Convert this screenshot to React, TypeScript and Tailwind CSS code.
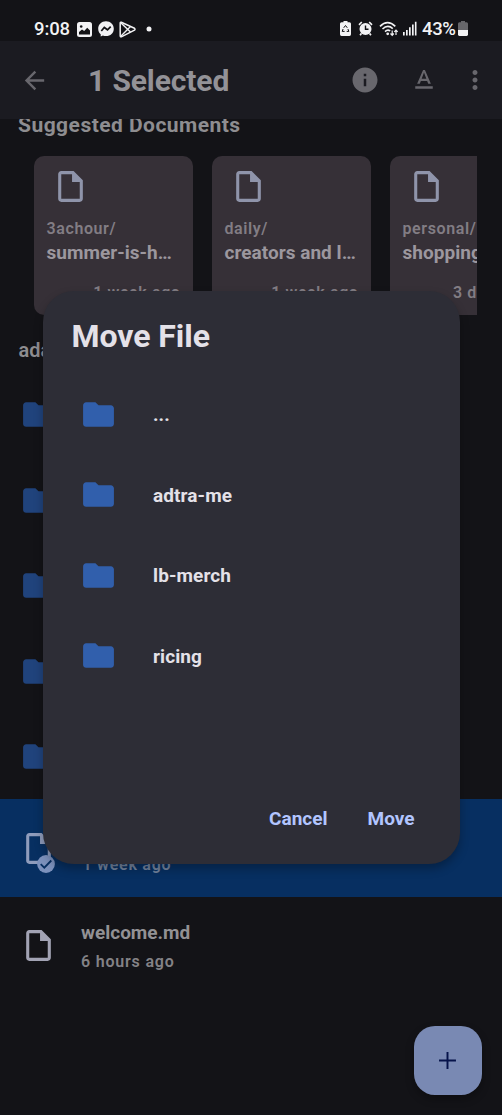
import React from "react";

function Icon({ d, size, className }: { d: string; size: number; className?: string }) {
  return (
    <svg width={size} height={size} viewBox="0 0 24 24" fill="currentColor" className={"shrink-0 " + (className ?? "")}>
      <path d={d} />
    </svg>
  );
}

const FILE = "M14 2H6c-1.1 0-1.99.9-1.99 2L4 20c0 1.1.89 2 1.99 2H18c1.1 0 2-.9 2-2V8l-6-6zM6 20V4h7v5h5v11H6z";
const FOLDER = "M10 4H4c-1.1 0-1.99.9-1.99 2L2 18c0 1.1.9 2 2 2h16c1.1 0 2-.9 2-2V8c0-1.1-.9-2-2-2h-8l-2-2z";
const BACK = "M20 11H7.83l5.59-5.59L12 4l-8 8 8 8 1.41-1.41L7.83 13H20v-2z";
const INFO = "M12 2C6.48 2 2 6.48 2 12s4.48 10 10 10 10-4.48 10-10S17.52 2 12 2zm1 15h-2v-6h2v6zm0-8h-2V7h2v2z";
const FORMAT = "M5 17v2h14v-2H5zm4.5-4.2h5l.9 2.2h2.1L12.75 4h-1.5L6.5 15h2.1l.9-2.2zM12 5.98L13.87 11h-3.74L12 5.98z";
const MORE = "M12 8c1.1 0 2-.9 2-2s-.9-2-2-2-2 .9-2 2 .9 2 2 2zm0 2c-1.1 0-2 .9-2 2s.9 2 2 2 2-.9 2-2-.9-2-2-2zm0 6c-1.1 0-2 .9-2 2s.9 2 2 2 2-.9 2-2-.9-2-2-2z";
const PLUS = "M19 12.8h-6.200v6.200h-1.600v-6.200H5v-1.600h6.200V5h1.600v6.200H19z";

function StatusBar() {
  return (
    <header className="flex h-[41px] shrink-0 items-start pl-[34px] pr-[34px] pt-[17px] text-[#f2f2f4]">
      <span className="w-[43px] text-[18.5px] font-medium leading-[24px] tracking-[-0.1px]">9:08</span>
      <svg width="15" height="15" viewBox="0 0 15 15" className="mt-[5px]">
        <rect width="15" height="15" rx="2.5" fill="currentColor" />
        <circle cx="4.2" cy="4.5" r="1.3" fill="#131316" />
        <path d="M2 12.5V10l3-2.5L7.2 9l3-3.3L13 8.5v4z" fill="#131316" />
      </svg>
      <svg width="16" height="16" viewBox="0 0 16 16" className="ml-[6px] mt-[4px]">
        <path d="M8 .2C3.5.2.2 3.4.2 7.7c0 2.3 1 4.3 2.5 5.6v2.3l2.2-1.1c1 .4 2 .6 3.1.6 4.5 0 7.8-3.2 7.8-7.4S12.5.2 8 .2z" fill="currentColor" />
        <path d="M3.3 10l3-3.5 3.2 2.3 3.2-3.2" fill="none" stroke="#131316" strokeWidth="1.7" />
      </svg>
      <svg width="17" height="17" viewBox="0 0 17 17" fill="none" stroke="currentColor" strokeLinejoin="round" className="ml-[5px] mt-[4px]">
        <path d="M2.3 1.2 15.5 7.3q1 .9 0 1.8L2.3 15.8q-1.1.2-1.1-1V2.2q0-1.200 1.1-1z" strokeWidth="1.5" />
        <path d="M2 2l9.5 9M2 15l9.5-9.5" strokeWidth="1.4" />
      </svg>
      <svg width="6" height="6" className="ml-[10px] mt-[9px]"><circle cx="3" cy="3" r="2.5" fill="currentColor" /></svg>
      <div className="ml-auto flex">
        <svg width="11" height="15" viewBox="0 0 11 15" className="mt-[4px]">
          <path d="M3.5 0h4v1.3H9.5Q11 1.3 11 2.8v10.5q0 1.7-1.5 1.7h-8Q0 15 0 13.3V2.8q0-1.5 1.5-1.5h2z" fill="currentColor" />
          <path d="M3.7 6.8 5.5 4.5l1.8 2.3M7.900 8l1 2.4H6.7M4.6 10.4H2.2L3.100 8" fill="none" stroke="#131316" strokeWidth="1" />
        </svg>
        <svg width="15" height="15" viewBox="0 0 15 15" className="ml-[7px] mt-[4px]">
          <circle cx="7.5" cy="8" r="6" fill="currentColor" />
          <path d="M1 3.8 3.8 1M14 3.8 11.2 1M3.3 12.5l-1.2 1.8M11.7 12.5l1.2 1.8" stroke="currentColor" strokeWidth="1.7" />
          <path d="M7.5 4.5V8.2h3" fill="none" stroke="#131316" strokeWidth="1.4" />
        </svg>
        <svg width="20" height="16" viewBox="0 0 20 16" fill="none" stroke="currentColor" className="ml-[6px] mt-[4px]">
          <path d="M1 5.3q7.5-7.3 15.3 0" strokeWidth="1.7" />
          <path d="M3.5 8q5.2-4.9 10.3-.4" strokeWidth="1.6" />
          <path d="M6 10.6q2.7-2.6 5.2-.6" strokeWidth="1.5" />
          <circle cx="8.7" cy="12.8" r="1.4" fill="currentColor" stroke="none" />
          <path d="M13.2 9.5v4.6m-1.7-1.6 1.7 1.8 1.6-1.8M17 14V9.300m-1.7 1.6L17 9.2l1.7 1.7" strokeWidth="1.2" />
        </svg>
        <svg width="14" height="15" viewBox="0 0 14 15" fill="currentColor" className="ml-[4px] mt-[4px]">
          <path d="M0 11h1.7v3.5H0zM3 9h1.7v5.5H3zM6 6.2h1.7v8.3H6zM9 3.4h1.7v11.1H9zM11.9.7h1.6v13.8h-1.6z" />
        </svg>
        <span className="ml-[5px] w-[36px] text-[18.5px] font-medium leading-[24px] tracking-[-0.35px]">43%</span>
        <svg width="10" height="15" viewBox="0 0 11 15" preserveAspectRatio="none" className="mt-[4px]">
          <path d="M3.3 0h4.4v1.3h1.8Q11 1.3 11 2.8V9H0V2.8q0-1.5 1.5-1.5h1.8z" fill="#66666a" />
          <path d="M0 9h11v4.3q0 1.7-1.5 1.7h-8Q0 15 0 13.3z" fill="currentColor" />
        </svg>
      </div>
    </header>
  );
}

function AppBar() {
  return (
    <nav className="flex h-[78px] shrink-0 items-center bg-[#1b1b21] pl-[20px] pr-[12px] text-[#68676d]">
      <Icon d={BACK} size={29} />
      <h1 className="ml-[39px] mt-[2px] text-[30px] font-bold leading-[40px] tracking-[-0.12px] text-[#939297]">1 Selected</h1>
      <Icon d={INFO} size={30} className="ml-auto" />
      <Icon d={FORMAT} size={30} className="ml-[29px]" />
      <Icon d={MORE} size={30} className="ml-[21px]" />
    </nav>
  );
}

const documents = [
  { dir: "3achour/", name: "summer-is-h…", age: "1 week ago" },
  { dir: "daily/", name: "creators and l…", age: "1 week ago" },
  { dir: "personal/", name: "shopping", age: "3 days ago" },
];

function DocumentCard({ dir, name, age }: { dir: string; name: string; age: string }) {
  return (
    <article className="flex h-[159px] w-[159px] shrink-0 flex-col rounded-[10px] bg-[#363037] px-[12.5px] pt-[12px]">
      <Icon d={FILE} size={37} className="ml-[5.500px] text-[#8f94aa]" />
      <p className="mt-[13px] text-[16px] font-semibold leading-[22px] tracking-[0.6px] text-[#827d84]">{dir}</p>
      <p className="mt-px whitespace-nowrap text-[19px] font-bold leading-[24px] tracking-[0.03px] text-[#9c979e]">{name}</p>
      <p className="mt-[17px] text-right text-[16px] font-semibold leading-[22px] tracking-[0.6px] text-[#827d84]">{age}</p>
    </article>
  );
}

const folderRows = [1, 2, 3, 4, 5];

function FileList() {
  return (
    <main className="flex min-h-0 flex-1 flex-col overflow-hidden text-[#8e8d90]">
      <h2 className="-mt-[9px] ml-[18px] text-[21px] font-bold leading-[30px] tracking-[0.47px]">Suggested Documents</h2>
      <section className="ml-[34px] mr-[25px] mt-[16px] flex gap-[19px] overflow-hidden">
        {documents.map((doc) => <DocumentCard key={doc.name} {...doc} />)}
      </section>
      <h2 className="ml-[18.5px] mt-[20px] text-[20px] font-semibold leading-[30px]">ada</h2>
      <div className="mt-[7px] flex flex-col">
        {folderRows.map((row) => (
          <div key={row} className="flex h-[85.5px] items-center pl-[20px]">
            <Icon d={FOLDER} size={37} className="text-[#20437c]" />
          </div>
        ))}
      </div>
      <div className="-mt-[0.500px] flex h-[97.5px] shrink-0 items-center bg-[#072f61] pl-[19.5px]">
        <div className="relative mt-[2px] h-[37px] w-[37px]">
          <Icon d={FILE} size={37} className="text-[#8f9cbc]" />
          <svg width="18" height="18" viewBox="0 0 18 18" className="absolute left-[17px] top-[25px]">
            <circle cx="9" cy="9" r="8.9" fill="#7c91bc" />
            <path d="M3.7 9.2 7.3 12.7 14.3 5.5" fill="none" stroke="#072f61" strokeWidth="1.8" />
          </svg>
        </div>
        <span className="ml-[26px] mt-[34px] text-[16px] font-semibold leading-[22px] tracking-[0.75px] text-[#73839d]">1 week ago</span>
      </div>
      <div className="flex h-[98px] shrink-0 items-center pl-[19.5px]">
        <Icon d={FILE} size={37} className="text-[#a2a3b4]" />
        <div className="ml-[24.5px] mt-[4px]">
          <p className="text-[19px] font-bold leading-[26px] text-[#929194]">welcome.md</p>
          <p className="mt-[3px] text-[16px] font-semibold leading-[26px] tracking-[0.8px] text-[#838286]">6 hours ago</p>
        </div>
      </div>
    </main>
  );
}

const destinations = ["...", "adtra-me", "lb-merch", "ricing"];

function MoveDialog() {
  return (
    <section role="dialog" className="absolute left-[42.5px] top-[291px] flex h-[573px] w-[417px] flex-col rounded-[31px] bg-[#2d2d36] shadow-[0_5px_10px_rgba(0,0,0,0.28)]">
      <h2 className="ml-[29px] mt-[24px] text-[32px] font-bold leading-[42px] tracking-[-0.05px] text-[#e4e1e8]">Move File</h2>
      <ul className="mt-[17px] flex flex-col">
        {destinations.map((name) => (
          <li key={name} className="flex h-[80.5px] items-center pl-[37.5px]">
            <Icon d={FOLDER} size={37} className="text-[#315fac]" />
            <span className="ml-[36px] mt-[2px] text-[19px] font-bold leading-[26px] tracking-[0.1px] text-[#e4e1e8]">{name}</span>
          </li>
        ))}
      </ul>
      <div className="mb-[32px] mr-[45px] mt-auto flex justify-end gap-[40px] text-[19px] font-bold leading-[26px] text-[#b2c5ff]">
        <button>Cancel</button>
        <button>Move</button>
      </div>
    </section>
  );
}

export default function App() {
  return (
    <div className="relative flex h-[1115px] w-[502px] flex-col overflow-hidden bg-[#131317] font-['Roboto',sans-serif]">
      <StatusBar />
      <AppBar />
      <FileList />
      <MoveDialog />
      <button className="absolute bottom-[20px] right-[20px] flex h-[69px] w-[68.5px] items-center justify-center rounded-[21px] bg-[#7989b3] text-[#06134a] shadow-[0_4px_8px_rgba(0,0,0,0.3)]">
        <Icon d={PLUS} size={29} />
      </button>
    </div>
  );
}
